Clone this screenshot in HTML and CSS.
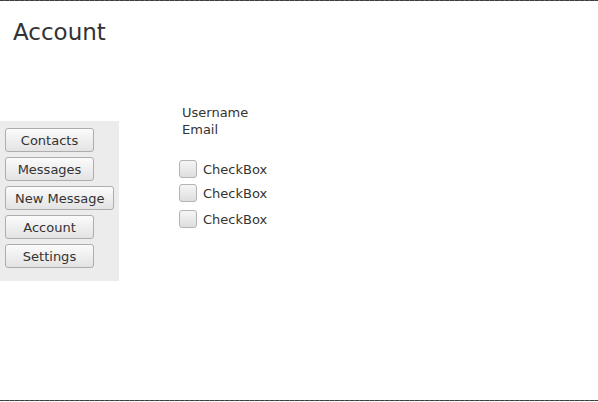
FILE: index.html
```html
<!DOCTYPE html>
<html>
<head>
<meta charset="utf-8">
<link rel="stylesheet" href="styles.css">
</head>
<body>
<div class="window">
  <div class="rule"></div>
  <h1 class="title">Account</h1>
  <div class="main">
    <nav class="sidebar">
      <button class="btn">Contacts</button>
      <button class="btn">Messages</button>
      <button class="btn">New Message</button>
      <button class="btn">Account</button>
      <button class="btn">Settings</button>
    </nav>
    <section class="content">
      <div class="labels">
        <div class="label">Username</div>
        <div class="label">Email</div>
      </div>
      <label class="check first"><span class="box"></span><span class="check-text">CheckBox</span></label>
      <label class="check second"><span class="box"></span><span class="check-text">CheckBox</span></label>
      <label class="check third"><span class="box"></span><span class="check-text">CheckBox</span></label>
    </section>
  </div>
  <div class="spacer"></div>
  <div class="rule"></div>
</div>
</body>
</html>
```

FILE: styles.css
```css
html, body {
  margin: 0;
  padding: 0;
  background: #ffffff;
}
body {
  width: 598px;
  height: 402px;
  overflow: hidden;
  font-family: "DejaVu Sans", sans-serif;
  color: #333333;
}
.window {
  display: flex;
  flex-direction: column;
  height: 401px;
}
.rule {
  height: 1px;
  flex: none;
  background: repeating-linear-gradient(90deg, #3c3c3c 0 4px, #6a6a6a 4px 5px);
}
.title {
  margin: 18px 0 0 13px;
  font-size: 23px;
  font-weight: normal;
  line-height: 27px;
  color: #333333;
  flex: none;
}
.main {
  display: flex;
  margin-top: 58px;
  flex: none;
}
.sidebar {
  width: 119px;
  height: 160px;
  box-sizing: border-box;
  margin-top: 17px;
  padding: 7px 5px;
  background: #ececec;
  display: flex;
  flex-direction: column;
  align-items: flex-start;
  gap: 5px;
}
.btn {
  height: 24px;
  min-width: 89px;
  box-sizing: border-box;
  padding: 2px 9px 0;
  border: 1px solid #adadad;
  border-radius: 3px;
  background: linear-gradient(#fbfbfb, #e3e3e3);
  font-family: "DejaVu Sans", sans-serif;
  font-size: 13px;
  color: #333333;
  line-height: 20px;
  white-space: nowrap;
}
.content {
  margin-left: 60px;
  display: flex;
  flex-direction: column;
  align-items: flex-start;
}
.labels {
  padding-left: 3px;
}
.label {
  font-size: 13px;
  line-height: 17px;
}
.check {
  display: flex;
  align-items: center;
  gap: 6px;
  height: 18px;
  font-size: 13px;
}
.check.first { margin-top: 22px; }
.check.second { margin-top: 6px; }
.check.third { margin-top: 8px; }
.box {
  width: 18px;
  height: 18px;
  box-sizing: border-box;
  border: 1px solid #b4b4b4;
  border-radius: 3px;
  background: linear-gradient(#f6f6f6, #dedede);
}
.check-text {
  line-height: 18px;
  position: relative;
  top: 1px;
}
.spacer {
  flex: 1;
}
```
